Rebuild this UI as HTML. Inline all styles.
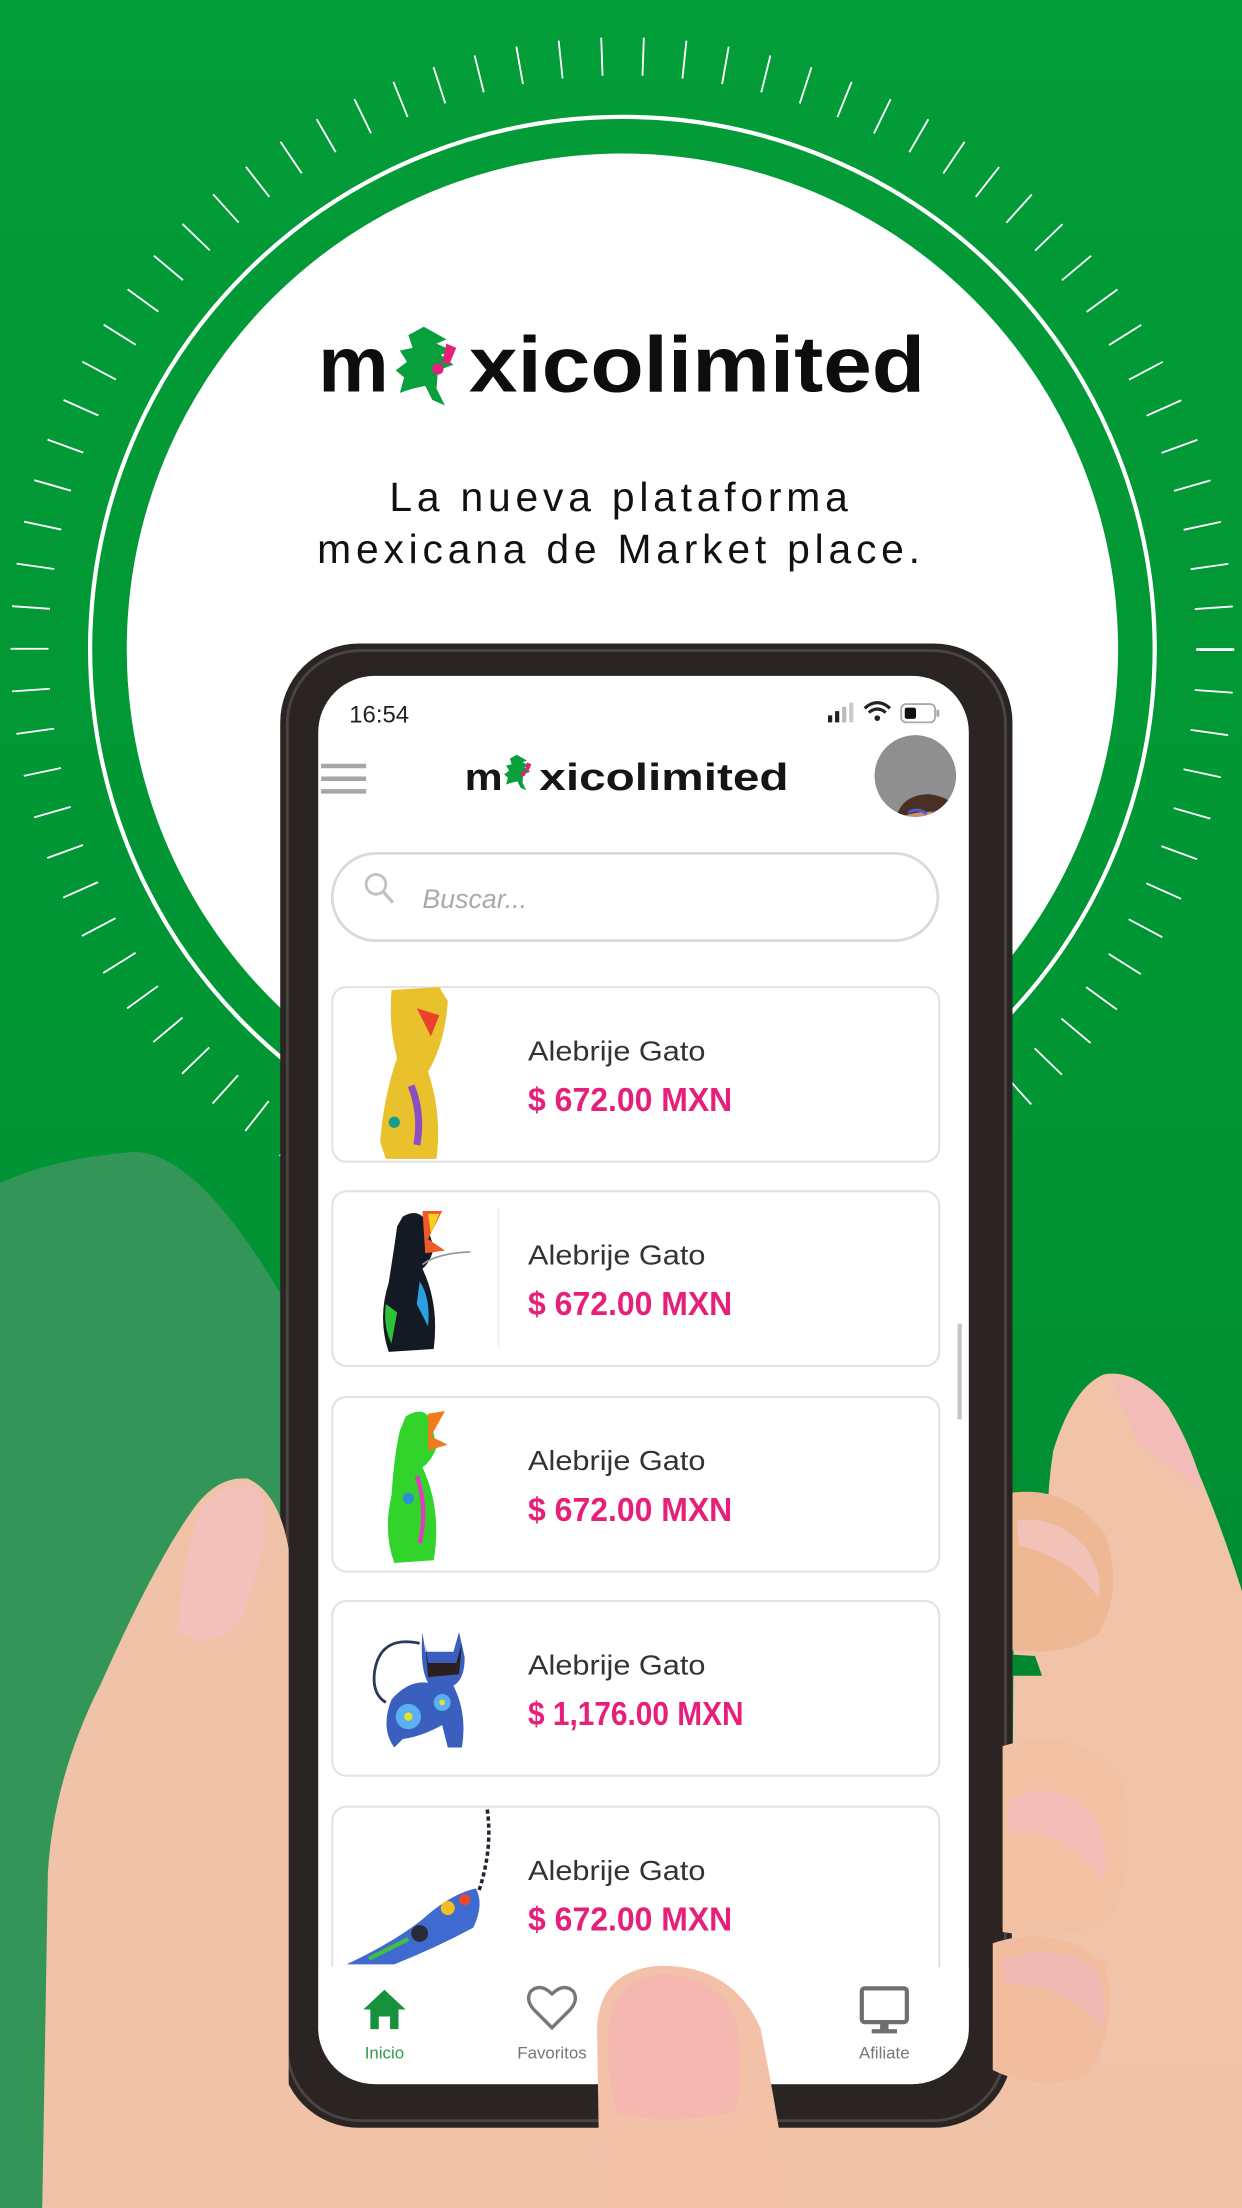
<!DOCTYPE html>
<html><head><meta charset="utf-8">
<style>
html,body{margin:0;padding:0;width:1242px;height:2208px;overflow:hidden;background:#029b37}
svg{display:block}
text{font-family:"Liberation Sans",sans-serif}
</style></head>
<body>
<svg width="1242" height="2208" viewBox="0 0 882 1568" xmlns="http://www.w3.org/2000/svg">
<defs>
<linearGradient id="bg" x1="0" y1="0" x2="0" y2="1">
<stop offset="0" stop-color="#029c38"/><stop offset="0.5" stop-color="#019534"/><stop offset="1" stop-color="#00832e"/>
</linearGradient>
<g id="leaf">
<path d="M20 0 L36 9 L29 12 L40 17 L32 20 L41 27 L30 31 L29 44 L35 56 L26 52 L21 42 L12 44 L3 47 L6 36 L0 31 L8 25 L3 17 L12 15 L9 6 Z" fill="#07a03c"/>
<path d="M36 12 L43 15 L38 27 L33 25 Z" fill="#e8207a"/>
<circle cx="30" cy="30" r="4" fill="#e8207a"/>
</g>
<clipPath id="scr"><rect x="226" y="480" width="462" height="1000" rx="40"/></clipPath>
<clipPath id="list"><rect x="226" y="690" width="462" height="707"/></clipPath>
<clipPath id="av"><circle cx="650" cy="551" r="29"/></clipPath>
</defs>
<rect width="882" height="1568" fill="url(#bg)"/>
<path d="M0 840 Q40 822 95 818 Q140 818 200 920 L200 1568 L0 1568 Z" fill="#339557"/>
<circle cx="442" cy="461" r="421" fill="none" stroke="#fff" stroke-width="27" stroke-dasharray="1.3 28.08"/>
<circle cx="442" cy="461" r="378" fill="none" stroke="#fff" stroke-width="3"/>
<circle cx="442" cy="461" r="352" fill="#fff"/>

<text x="226" y="278" font-size="56" font-weight="700" fill="#0d0d0d" textLength="50" lengthAdjust="spacingAndGlyphs">m</text>
<use href="#leaf" transform="translate(281,232)"/>
<text x="333" y="278" font-size="56" font-weight="700" fill="#0d0d0d" textLength="324" lengthAdjust="spacingAndGlyphs">xicolimited</text>

<text x="441" y="363" font-size="29" fill="#111" text-anchor="middle" letter-spacing="3.4">La nueva plataforma</text>
<text x="441" y="400" font-size="29" fill="#111" text-anchor="middle" letter-spacing="3.4">mexicana de Market place.</text>

<!-- skin below phone -->
<path d="M30 1568 L34 1470 Q300 1470 560 1470 Q800 1470 882 1450 L882 1568 Z" fill="#f0c3a9"/>

<rect x="199" y="457" width="520" height="1054" rx="56" fill="#2a2522"/>
<rect x="204" y="462" width="510" height="1044" rx="52" fill="none" stroke="#4a4542" stroke-width="2"/>
<rect x="226" y="480" width="462" height="1000" rx="40" fill="#fff"/>
<g clip-path="url(#scr)">
<text x="248" y="513" font-size="17" fill="#222">16:54</text>
<rect x="588" y="508" width="3" height="5" fill="#222"/><rect x="593" y="505" width="3" height="8" fill="#222"/><rect x="598" y="502" width="3" height="11" fill="#bbb"/><rect x="603" y="499" width="3" height="14" fill="#ccc"/>
<path d="M614 503 Q623 495 632 503 M617 506 Q623 501 629 506" fill="none" stroke="#222" stroke-width="2.2"/><circle cx="623" cy="510" r="2" fill="#222"/>
<rect x="640" y="500" width="24" height="13" rx="3.5" fill="none" stroke="#aaa" stroke-width="1.3"/><rect x="642.5" y="502.5" width="8" height="8" rx="1.5" fill="#111"/><rect x="665" y="504" width="2" height="5" fill="#aaa"/>
<path d="M228 544 H260 M228 553 H260 M228 562 H260" stroke="#a6a6a6" stroke-width="3.2"/>
<text x="330" y="561" font-size="27" font-weight="700" fill="#151515" textLength="27" lengthAdjust="spacingAndGlyphs">m</text>
<use href="#leaf" transform="translate(358,536) scale(0.45)"/>
<text x="383" y="561" font-size="27" font-weight="700" fill="#151515" textLength="177" lengthAdjust="spacingAndGlyphs">xicolimited</text>
<g clip-path="url(#av)">
<circle cx="650" cy="551" r="29" fill="#8f8f8f"/>
<path d="M636 582 Q640 564 660 564 Q676 566 680 576 L680 590 L636 590 Z" fill="#4a3024"/>
<path d="M640 580 Q656 574 680 578 L680 590 L640 590 Z" fill="#c9906e"/>
<path d="M645 577 Q652 573 658 578 M662 578 Q670 573 678 576" stroke="#4a5bd6" stroke-width="2" fill="none"/>
</g>
<rect x="236" y="606" width="430" height="62" rx="31" fill="#fff" stroke="#dadada" stroke-width="2"/>
<circle cx="267" cy="628" r="7" fill="none" stroke="#c2c2c2" stroke-width="2"/><path d="M272 633 L279 641" stroke="#c2c2c2" stroke-width="2.4"/>
<text x="300" y="645" font-size="19" font-style="italic" fill="#aaa">Buscar...</text>

<g clip-path="url(#list)">
<g transform="translate(0,701)">
<rect x="236" y="0" width="431" height="124" rx="10" fill="#fff" stroke="#e2e2e2" stroke-width="1.5"/>
<path d="M278 2 Q276 30 282 50 Q272 80 270 110 L274 122 L310 122 Q314 90 304 60 Q316 40 318 10 L312 0 Z" fill="#e8c12c"/>
<path d="M296 15 L312 20 L306 35 Z" fill="#e8432a"/><path d="M292 70 Q300 90 296 112" stroke="#8a4fc2" stroke-width="5" fill="none"/><circle cx="280" cy="96" r="4" fill="#1a9a8a"/>
<text x="375" y="52" font-size="20" fill="#333" textLength="126" lengthAdjust="spacingAndGlyphs">Alebrije Gato</text>
<text x="375" y="88" font-size="24" font-weight="700" fill="#e6207a" textLength="145" lengthAdjust="spacingAndGlyphs">$ 672.00 MXN</text>
</g>
<g transform="translate(0,846)">
<rect x="236" y="0" width="431" height="124" rx="10" fill="#fff" stroke="#e2e2e2" stroke-width="1.5"/>
<line x1="354" y1="12" x2="354" y2="112" stroke="#eee" stroke-width="1"/>
<path d="M286 18 Q296 12 302 20 L308 40 Q306 50 300 55 Q312 80 308 112 L276 114 Q268 90 276 65 Q280 40 282 25 Z" fill="#141a24"/>
<path d="M300 14 L314 14 L304 34 L316 42 L302 44 Z" fill="#f05a28"/><path d="M304 16 L312 16 L306 30 Z" fill="#f2d21c"/>
<path d="M274 80 Q272 96 278 108 L282 86 Z" fill="#2ec13a"/><path d="M298 64 Q306 76 304 96 L296 80 Z" fill="#2aa0e0"/>
<path d="M300 52 Q310 44 334 43" stroke="#999" stroke-width="1.2" fill="none"/>
<text x="375" y="52" font-size="20" fill="#333" textLength="126" lengthAdjust="spacingAndGlyphs">Alebrije Gato</text>
<text x="375" y="88" font-size="24" font-weight="700" fill="#e6207a" textLength="145" lengthAdjust="spacingAndGlyphs">$ 672.00 MXN</text>
</g>
<g transform="translate(0,992)">
<rect x="236" y="0" width="431" height="124" rx="10" fill="#fff" stroke="#e2e2e2" stroke-width="1.5"/>
<path d="M288 14 Q300 6 306 16 L310 36 Q306 46 300 50 Q314 80 308 116 L280 118 Q272 96 278 70 Q280 40 284 24 Z" fill="#32d42c"/>
<path d="M304 12 L316 10 L306 28 L318 34 L304 38 Z" fill="#f07a1c"/><path d="M296 56 Q304 80 298 104" stroke="#e23ac0" stroke-width="3" fill="none"/><circle cx="290" cy="72" r="4" fill="#2a8fd6"/>
<text x="375" y="52" font-size="20" fill="#333" textLength="126" lengthAdjust="spacingAndGlyphs">Alebrije Gato</text>
<text x="375" y="88" font-size="24" font-weight="700" fill="#e6207a" textLength="145" lengthAdjust="spacingAndGlyphs">$ 672.00 MXN</text>
</g>
<g transform="translate(0,1137)">
<rect x="236" y="0" width="431" height="124" rx="10" fill="#fff" stroke="#e2e2e2" stroke-width="1.5"/>
<path d="M298 30 Q270 24 266 50 Q264 66 274 72" stroke="#2c3a5a" stroke-width="2" fill="none"/>
<path d="M300 22 L302 36 L322 36 L326 22 L330 40 Q330 56 322 60 Q332 80 328 104 L318 104 L314 88 Q300 96 286 98 L280 104 Q270 90 278 70 Q290 56 304 58 Q298 48 300 22 Z" fill="#3a5fbf"/>
<path d="M302 30 L304 44 L324 44 L328 30 L326 52 L304 54 Z" fill="#2a2020"/>
<circle cx="290" cy="82" r="9" fill="#5ab0f0"/><circle cx="290" cy="82" r="3" fill="#e8e030"/><circle cx="314" cy="72" r="6" fill="#5ab0f0"/><circle cx="314" cy="72" r="2" fill="#e8e030"/>
<text x="375" y="52" font-size="20" fill="#333" textLength="126" lengthAdjust="spacingAndGlyphs">Alebrije Gato</text>
<text x="375" y="88" font-size="24" font-weight="700" fill="#e6207a" textLength="153" lengthAdjust="spacingAndGlyphs">$ 1,176.00 MXN</text>
</g>
<g transform="translate(0,1283)">
<rect x="236" y="0" width="431" height="140" rx="10" fill="#fff" stroke="#e2e2e2" stroke-width="1.5"/>
<path d="M346 2 Q350 30 340 60" stroke="#223" stroke-width="2.5" stroke-dasharray="3 2" fill="none"/>
<path d="M246 112 Q280 96 300 80 Q320 62 338 58 Q344 70 336 86 Q310 100 280 112 Z" fill="#3f6ad0"/>
<circle cx="318" cy="72" r="5" fill="#f0c020"/><circle cx="330" cy="66" r="4" fill="#e84a2a"/><circle cx="298" cy="90" r="6" fill="#2a2a3a"/><path d="M262 108 L290 94" stroke="#40c040" stroke-width="3"/>
<text x="375" y="52" font-size="20" fill="#333" textLength="126" lengthAdjust="spacingAndGlyphs">Alebrije Gato</text>
<text x="375" y="88" font-size="24" font-weight="700" fill="#e6207a" textLength="145" lengthAdjust="spacingAndGlyphs">$ 672.00 MXN</text>
</g>
</g>
<rect x="680" y="940" width="3" height="68" fill="#c4c4c4"/>
<rect x="226" y="1397" width="462" height="90" fill="#fff"/>
<path d="M273 1413 L288 1427 L283 1427 L283 1441 L277 1441 L277 1432 L269 1432 L269 1441 L263 1441 L263 1427 L258 1427 Z" fill="#16923c"/>
<text x="273" y="1462" font-size="12" fill="#2f9a4f" text-anchor="middle">Inicio</text>
<path d="M392 1440 L379 1427 Q373 1420 377 1414 Q384 1408 392 1416 Q400 1408 407 1414 Q411 1420 405 1427 Z" fill="none" stroke="#777" stroke-width="2.4"/>
<text x="392" y="1462" font-size="12" fill="#777" text-anchor="middle">Favoritos</text>
<rect x="612" y="1412" width="32" height="24" rx="2" fill="none" stroke="#6f6f6f" stroke-width="3"/>
<rect x="625" y="1437" width="6" height="5" fill="#6f6f6f"/><rect x="619" y="1441" width="18" height="3" fill="#6f6f6f"/>
<text x="628" y="1462" font-size="12" fill="#777" text-anchor="middle">Afiliate</text>
</g>

<!-- left hand -->
<path d="M30 1568 L34 1330 Q38 1262 72 1195 Q112 1105 140 1068 Q156 1048 176 1050 Q198 1060 205 1100 L205 1568 Z" fill="#f0c3a9"/>
<path d="M143 1072 Q160 1050 182 1056 Q193 1075 184 1110 L172 1148 Q160 1165 142 1164 L126 1160 Q130 1100 143 1072 Z" fill="#f3c0bb"/>
<!-- right hand -->
<path d="M882 1130 Q860 1060 830 1000 Q808 972 784 976 Q762 985 748 1030 Q740 1080 748 1125 L720 1120 L718 1470 L882 1470 Z" fill="#f1c3a8"/>
<path d="M790 980 Q812 975 830 1000 Q848 1030 855 1060 Q830 1040 808 1025 Z" fill="#f4bcb8"/>
<path d="M719 1060 Q760 1055 785 1090 Q798 1130 780 1160 Q760 1176 719 1172 Z" fill="#efb894"/>
<path d="M722 1080 Q750 1075 772 1100 Q784 1120 780 1135 Q760 1105 724 1098 Z" fill="#f2c2b8"/>
<path d="M719 1175 L719 1190 L740 1190 L735 1176 Z" fill="#00862f"/>
<path d="M712 1240 Q760 1225 795 1260 Q810 1310 790 1360 Q760 1380 712 1372 Z" fill="#f2c0a3"/>
<path d="M716 1278 Q750 1262 778 1290 Q790 1320 782 1335 Q760 1300 716 1300 Z" fill="#f2bdb6"/>
<path d="M705 1380 Q750 1365 785 1395 Q795 1440 772 1475 Q735 1485 705 1470 Z" fill="#f2bd9f"/>
<path d="M712 1392 Q750 1378 778 1398 Q788 1420 782 1440 Q760 1410 714 1408 Z" fill="#f2bab4"/>
<!-- thumb -->
<path d="M426 1568 L424 1440 Q426 1398 470 1396 Q520 1396 540 1440 Q552 1500 562 1568 Z" fill="#f2c1a8"/>
<path d="M432 1440 Q436 1404 470 1402 Q508 1402 522 1432 Q530 1470 522 1500 Q472 1510 438 1500 Q430 1470 432 1440 Z" fill="#f4b8b0"/>
</svg>
</body></html>
